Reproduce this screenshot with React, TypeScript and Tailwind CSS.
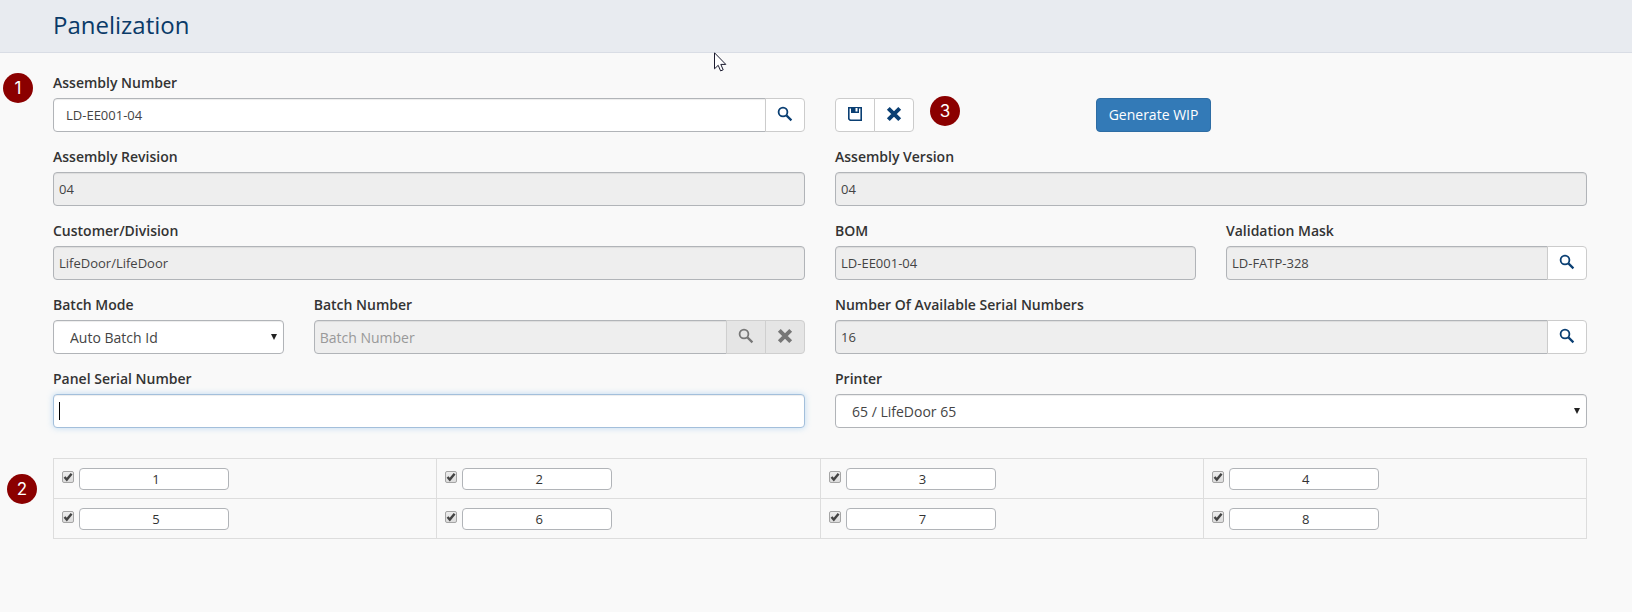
import { useState } from "react";
import type { ReactNode } from "react";

const boxClass =
  "block h-[34px] w-full min-w-0 border border-[#b1b4b8] px-[5px] text-[13px] text-[#444] shadow-[inset_0_1px_1px_rgba(0,0,0,0.075)] outline-none";
const labelClass = "mb-[5px] block h-5 text-sm leading-5 font-semibold text-[#333]";
const iconButtonClass =
  "flex h-[34px] w-10 shrink-0 items-center justify-center border border-[#ccc] bg-white text-[#0a3f73] disabled:border-[#cfcfcf] disabled:bg-[#e5e5e5] disabled:text-[#777]";

function SearchIcon() {
  return (
    <svg viewBox="0 0 16 16" className="mb-0.5 size-4" aria-hidden="true">
      <circle cx="6" cy="6" r="4.4" fill="none" stroke="currentColor" strokeWidth="1.8" />
      <path d="M9.4 9.4l5 5" stroke="currentColor" strokeWidth="2.2" />
    </svg>
  );
}

function CloseIcon() {
  return (
    <svg viewBox="0 0 16 16" className="mb-0.5 size-4" aria-hidden="true">
      <path d="M2.3 2.3l11.4 11.4M13.7 2.3L2.3 13.7" stroke="currentColor" strokeWidth="4" />
    </svg>
  );
}

function SaveIcon() {
  return (
    <svg viewBox="0 0 16 16" className="mb-0.5 size-4" aria-hidden="true">
      <path d="M1.8 1.8h12.4v12.4H3.2L1.8 12.8z" fill="none" stroke="currentColor" strokeWidth="1.6" />
      <path d="M4 1.5h8V7H4z" fill="currentColor" />
      <path d="M8.5 2h2v3.5h-2z" fill="#fff" />
    </svg>
  );
}

function Field({ id, label, className, children }: { id: string; label: string; className: string; children: ReactNode }) {
  return (
    <div className={className}>
      <label htmlFor={id} className={labelClass}>
        {label}
      </label>
      <div className="flex">{children}</div>
    </div>
  );
}

function SelectBox({ id, options }: { id: string; options: string[] }) {
  return (
    <div className="relative w-full">
      <select
        id={id}
        className="block h-[34px] w-full appearance-none rounded border border-[#b1b4b8] bg-white pt-0.5 pr-6 pl-4 text-sm text-[#444] shadow-[inset_0_1px_1px_rgba(0,0,0,0.075)] outline-none"
      >
        {options.map((option) => (
          <option key={option}>{option}</option>
        ))}
      </select>
      <svg viewBox="0 0 6 6" className="pointer-events-none absolute top-[14px] right-[7px] size-[6px]" aria-hidden="true">
        <path d="M0 0h6L3 6z" fill="#222" />
      </svg>
    </div>
  );
}

function Badge({ value, className }: { value: number; className: string }) {
  return (
    <span
      className={`absolute flex size-[30px] items-center justify-center rounded-full bg-[#8b0000] font-['Inter',sans-serif] text-[17px] leading-none text-white ${className}`}
    >
      {value}
    </span>
  );
}

function PanelCell({ position }: { position: number }) {
  const [checked, setChecked] = useState(true);
  return (
    <td className="h-10 border border-[#ddd] p-0">
      <div className="flex items-center gap-[5px] pl-2">
        <span className="relative mb-1 size-3">
          <input
            type="checkbox"
            aria-label={`Use position ${position}`}
            checked={checked}
            onChange={() => setChecked(!checked)}
            className="block size-3 appearance-none rounded-[2px] border border-[#a5a5a5] bg-linear-to-b from-[#ededed] to-[#dcdcdc]"
          />
          {checked && (
            <svg viewBox="0 0 12 12" className="pointer-events-none absolute inset-0 size-3" aria-hidden="true">
              <path d="M2.5 6l2.3 2.6L9.6 2.8" fill="none" stroke="#444" strokeWidth="2.4" />
            </svg>
          )}
        </span>
        <input
          aria-label={`Position ${position}`}
          defaultValue={position}
          className="h-[22px] w-[150px] rounded border border-[#b1b4b8] bg-white pl-1 text-center text-[13px] text-[#333] outline-none"
        />
      </div>
    </td>
  );
}

export default function App() {
  return (
    <div className="relative min-h-screen bg-[#f9f9f9] font-['Open_Sans','Noto_Sans',sans-serif] text-[#333]">
      <header className="border-b border-[#d9dde5] bg-[#e8ebf0] px-[53px] pt-[9px] pb-[11px]">
        <h1 className="text-2xl leading-8 text-[#0a3a68]">Panelization</h1>
      </header>

      <main className="pt-5 pr-[45px] pb-10 pl-[53px]">
        <form className="grid grid-cols-12 gap-x-[30px] gap-y-[15px]" onSubmit={(event) => event.preventDefault()}>
          <Field id="assembly" label="Assembly Number" className="col-span-6">
            <input id="assembly" defaultValue="LD-EE001-04" className={`${boxClass} rounded-l bg-white pl-3`} />
            <button type="button" aria-label="Find assembly" className={`${iconButtonClass} -ml-px rounded-r`}>
              <SearchIcon />
            </button>
          </Field>
          <div className="col-span-2 flex items-end">
            <button type="button" aria-label="Save" className={`${iconButtonClass} rounded-l`}>
              <SaveIcon />
            </button>
            <button type="button" aria-label="Clear" className={`${iconButtonClass} -ml-px rounded-r`}>
              <CloseIcon />
            </button>
            <span className="relative ml-4 size-[30px]">
              <Badge value={3} className="-top-1.5 left-0" />
            </span>
          </div>
          <div className="col-span-4 flex items-end">
            <button type="button" className="h-[34px] rounded border border-[#2e6da4] bg-[#337ab7] px-3 text-sm text-white">
              Generate WIP
            </button>
          </div>

          <Field id="revision" label="Assembly Revision" className="col-span-6">
            <input id="revision" readOnly value="04" className={`${boxClass} rounded bg-[#eee]`} />
          </Field>
          <Field id="version" label="Assembly Version" className="col-span-6">
            <input id="version" readOnly value="04" className={`${boxClass} rounded bg-[#eee]`} />
          </Field>

          <Field id="customer" label="Customer/Division" className="col-span-6">
            <input id="customer" readOnly value="LifeDoor/LifeDoor" className={`${boxClass} rounded bg-[#eee]`} />
          </Field>
          <Field id="bom" label="BOM" className="col-span-3">
            <input id="bom" readOnly value="LD-EE001-04" className={`${boxClass} rounded bg-[#eee]`} />
          </Field>
          <Field id="mask" label="Validation Mask" className="col-span-3">
            <input id="mask" readOnly value="LD-FATP-328" className={`${boxClass} rounded-l bg-[#eee]`} />
            <button type="button" aria-label="Find validation mask" className={`${iconButtonClass} -ml-px rounded-r`}>
              <SearchIcon />
            </button>
          </Field>

          <Field id="mode" label="Batch Mode" className="col-span-2">
            <SelectBox id="mode" options={["Auto Batch Id"]} />
          </Field>
          <Field id="batch" label="Batch Number" className="col-span-4">
            <input
              id="batch"
              disabled
              placeholder="Batch Number"
              className={`${boxClass} rounded-l bg-[#eee] pt-0.5 placeholder:text-sm placeholder:text-[#999]`}
            />
            <button type="button" disabled aria-label="Find batch" className={`${iconButtonClass} -ml-px`}>
              <SearchIcon />
            </button>
            <button type="button" disabled aria-label="Clear batch" className={`${iconButtonClass} -ml-px rounded-r`}>
              <CloseIcon />
            </button>
          </Field>
          <Field id="available" label="Number Of Available Serial Numbers" className="col-span-6">
            <input id="available" readOnly value="16" className={`${boxClass} rounded-l bg-[#eee]`} />
            <button type="button" aria-label="Show serial numbers" className={`${iconButtonClass} -ml-px rounded-r`}>
              <SearchIcon />
            </button>
          </Field>

          <Field id="panel" label="Panel Serial Number" className="col-span-6">
            <div className="relative w-full">
              <input
                id="panel"
                className="block h-[34px] w-full rounded border border-[#a3bfdb] bg-white px-[5px] text-[13px] caret-transparent shadow-[inset_0_1px_1px_rgba(0,0,0,0.075),0_0_6px_rgba(102,175,233,0.4)] outline-none"
              />
              <span className="pointer-events-none absolute top-2 left-1.5 h-[18px] w-px bg-black" />
            </div>
          </Field>
          <Field id="printer" label="Printer" className="col-span-6">
            <SelectBox id="printer" options={["65 / LifeDoor 65"]} />
          </Field>
        </form>

        <table className="mt-[30px] w-full table-fixed border-collapse">
          <tbody>
            <tr>
              {[1, 2, 3, 4].map((n) => (
                <PanelCell key={n} position={n} />
              ))}
            </tr>
            <tr>
              {[5, 6, 7, 8].map((n) => (
                <PanelCell key={n} position={n} />
              ))}
            </tr>
          </tbody>
        </table>
      </main>

      <Badge value={1} className="top-[73px] left-[3px]" />
      <Badge value={2} className="top-[474px] left-[7px]" />
      <svg viewBox="0 0 13 20" className="pointer-events-none absolute top-[52px] left-[714px] h-5 w-[13px]" aria-hidden="true">
        <path d="M.5 .8v16l3.7-3.5 2.4 5.6 2.6-1.1-2.4-5.4h5z" fill="#fff" stroke="#1a1a2e" />
      </svg>
    </div>
  );
}
